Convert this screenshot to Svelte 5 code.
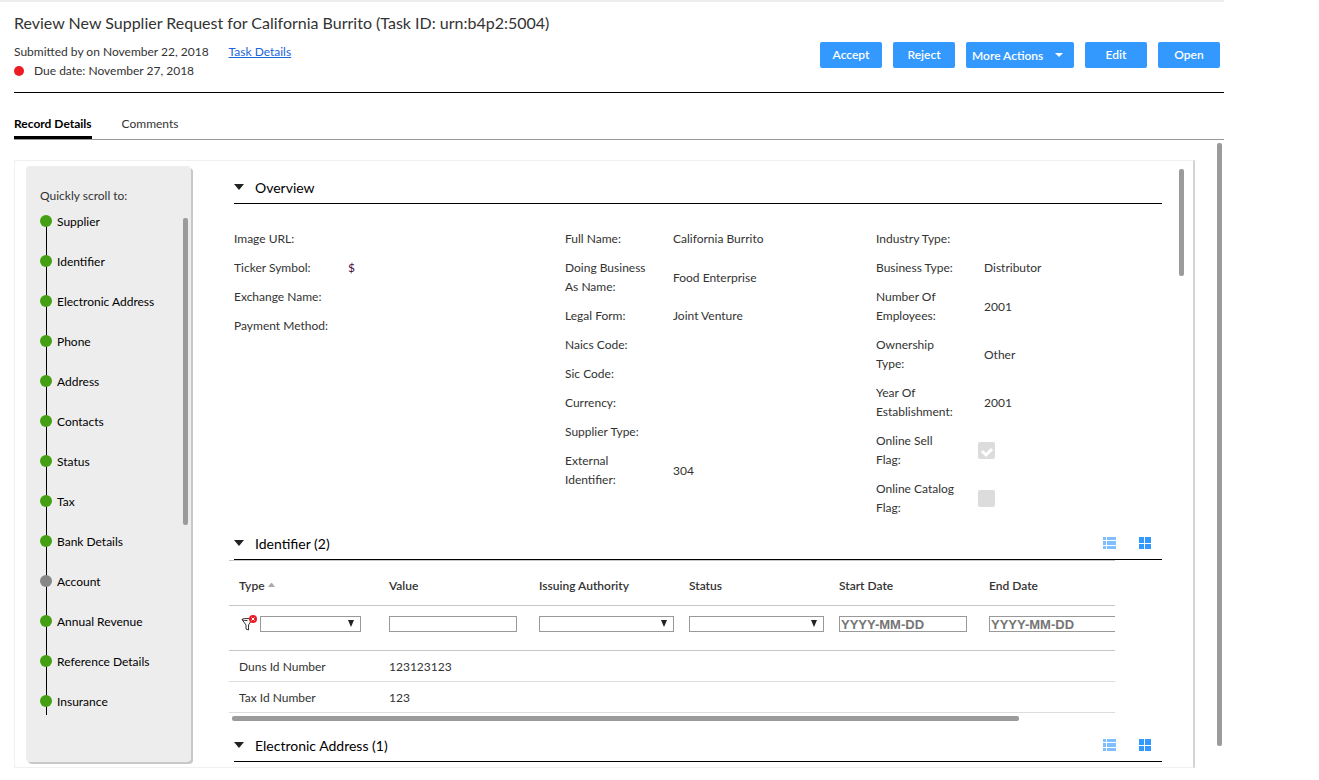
<!-- \src\components\tasks\SupplierReview.svelte -->

<script>
  let activeTab = $state('Record Details');
  const tabs = ['Record Details', 'Comments'];

  const steps = [
    { name: 'Supplier', done: true },
    { name: 'Identifier', done: true },
    { name: 'Electronic Address', done: true },
    { name: 'Phone', done: true },
    { name: 'Address', done: true },
    { name: 'Contacts', done: true },
    { name: 'Status', done: true },
    { name: 'Tax', done: true },
    { name: 'Bank Details', done: true },
    { name: 'Account', done: false },
    { name: 'Annual Revenue', done: true },
    { name: 'Reference Details', done: true },
    { name: 'Insurance', done: true }
  ];

  const overview = [
    [
      { label: 'Image URL:' },
      { label: 'Ticker Symbol:', value: '$' },
      { label: 'Exchange Name:' },
      { label: 'Payment Method:' }
    ],
    [
      { label: 'Full Name:', value: 'California Burrito' },
      { label: 'Doing Business As Name:', value: 'Food Enterprise' },
      { label: 'Legal Form:', value: 'Joint Venture' },
      { label: 'Naics Code:' },
      { label: 'Sic Code:' },
      { label: 'Currency:' },
      { label: 'Supplier Type:' },
      { label: 'External Identifier:', value: '304' }
    ],
    [
      { label: 'Industry Type:' },
      { label: 'Business Type:', value: 'Distributor' },
      { label: 'Number Of Employees:', value: '2001' },
      { label: 'Ownership Type:', value: 'Other' },
      { label: 'Year Of Establishment:', value: '2001' },
      { label: 'Online Sell Flag:', id: 'online-sell', flag: true },
      { label: 'Online Catalog Flag:', id: 'online-catalog', flag: false }
    ]
  ];

  const columns = [
    { name: 'Type', filter: 'select', sorted: true },
    { name: 'Value', filter: 'text' },
    { name: 'Issuing Authority', filter: 'select' },
    { name: 'Status', filter: 'select' },
    { name: 'Start Date', filter: 'date' },
    { name: 'End Date', filter: 'date' }
  ];

  const identifiers = [
    ['Duns Id Number', '123123123', '', '', '', ''],
    ['Tax Id Number', '123', '', '', '', '']
  ];
</script>

{#snippet sectionHead(title, views)}
  <div class="section-head">
    <h2>
      <button type="button" class="toggle">
        <svg width="10" height="6" viewBox="0 0 10 6"><path d="M0 0h10L5 6z" fill="#222" /></svg>
        {title}
      </button>
    </h2>
    {#if views}
      <div class="views">
        <button type="button" class="icon list" aria-label="List view">
          <svg width="13" height="12" viewBox="0 0 13 12" fill="#80bfff">
            <path d="M0 0h3v3H0zM4 0h9v3H4zM0 4h3v4H0zM4 4h9v4H4zM0 9h3v3H0zM4 9h9v3H4z" />
          </svg>
        </button>
        <button type="button" class="icon" aria-label="Grid view">
          <svg width="12" height="12" viewBox="0 0 12 12" fill="#3399ff">
            <path d="M0 0h5v6H0zM6 0h6v6H6zM0 7h5v5H0zM6 7h6v5H6z" />
          </svg>
        </button>
      </div>
    {/if}
  </div>
{/snippet}

<div class="page">
  <header>
    <div class="task">
      <h1>Review New Supplier Request for California Burrito (Task ID: urn:b4p2:5004)</h1>
      <p>Submitted by on November 22, 2018 <a href="#details">Task Details</a></p>
      <p><span class="due-dot"></span>Due date: November 27, 2018</p>
    </div>
    <div class="actions">
      <button type="button">Accept</button>
      <button type="button">Reject</button>
      <button type="button" class="more">
        More Actions
        <svg width="8" height="4" viewBox="0 0 8 4"><path d="M0 0h8L4 4z" fill="#fff" /></svg>
      </button>
      <button type="button">Edit</button>
      <button type="button">Open</button>
    </div>
  </header>

  <nav class="tabs">
    {#each tabs as tab}
      <button type="button" class:active={tab === activeTab} onclick={() => (activeTab = tab)}>{tab}</button>
    {/each}
  </nav>

  <div class="body">
    <div class="panel">
      <aside>
        <p>Quickly scroll to:</p>
        <ul>
          {#each steps as step}
            <li><span class="dot" class:pending={!step.done}></span><a href="#section">{step.name}</a></li>
          {/each}
        </ul>
        <div class="thumb side-thumb"></div>
      </aside>

      <main>
        {@render sectionHead('Overview', false)}
        <div class="overview">
          {#each overview as group}
            <div class="group">
              {#each group as field}
                <div class="field">
                  {#if field.id}
                    <label class="name" for={field.id}>{field.label}</label>
                    <span class="check">
                      <input type="checkbox" id={field.id} checked={field.flag} disabled />
                      {#if field.flag}
                        <svg width="17" height="17" viewBox="0 0 17 17">
                          <path d="M4 9l4 4 6-6" fill="none" stroke="#fff" stroke-width="3" />
                        </svg>
                      {/if}
                    </span>
                  {:else}
                    <span class="name">{field.label}</span>
                    <span class:money={field.value === '$'}>{field.value ?? ''}</span>
                  {/if}
                </div>
              {/each}
            </div>
          {/each}
        </div>

        {@render sectionHead('Identifier (2)', true)}
        <div class="table-wrap">
          <table>
            <thead>
              <tr>
                {#each columns as col}
                  <th>
                    {col.name}
                    {#if col.sorted}
                      <svg width="7" height="4" viewBox="0 0 7 4"><path d="M0 4h7L4 0H3z" fill="#aaa" /></svg>
                    {/if}
                  </th>
                {/each}
              </tr>
              <tr class="filters">
                {#each columns as col}
                  <td>
                    <div class="filter">
                      {#if col.sorted}
                        <button type="button" class="icon" aria-label="Clear filters">
                          <svg width="17" height="17" viewBox="0 0 17 17">
                            <path
                              d="M2 4.500Q2 3.500 7 3.500Q12 3.500 12 4.500L8.500 10v5L6 14v-4zM2 4.500Q4 6 7.500 5.500"
                              fill="none"
                              stroke="#333"
                            />
                            <circle cx="13" cy="4" r="4" fill="#ec1c24" />
                            <path d="M11.500 2.500l3 3m0-3l-3 3" stroke="#fff" />
                          </svg>
                        </button>
                      {/if}
                      {#if col.filter === 'select'}
                        <span class="select">
                          <select aria-label="{col.name} filter"><option></option></select>
                          <svg width="6" height="7" viewBox="0 0 6 7"><path d="M0 0h6L3 7z" fill="#222" /></svg>
                        </span>
                      {:else if col.filter === 'date'}
                        <input type="text" placeholder="YYYY-MM-DD" aria-label="{col.name} filter" />
                      {:else}
                        <input type="text" aria-label="{col.name} filter" />
                      {/if}
                    </div>
                  </td>
                {/each}
              </tr>
            </thead>
            <tbody>
              {#each identifiers as row}
                <tr>
                  {#each row as cell}
                    <td>{cell}</td>
                  {/each}
                </tr>
              {/each}
            </tbody>
          </table>
        </div>
        <div class="thumb table-thumb"></div>

        {@render sectionHead('Electronic Address (1)', true)}
      </main>
      <div class="thumb panel-thumb"></div>
    </div>
    <div class="thumb body-thumb"></div>
  </div>
</div>

<style>
  :global(body) {
    background: #fff;
  }

  .page {
    margin-right: 95px;
    border-top: 2px solid #ededed;
    padding-left: 14px;
    font-family: Lato, 'Open Sans', sans-serif;
    font-size: 12px;
    line-height: 19px;
    color: #333;
  }

  h1,
  h2,
  p,
  ul {
    margin: 0;
    padding: 0;
    font-weight: normal;
  }

  button {
    border: 0;
    padding: 0;
    background: none;
    font: inherit;
    color: inherit;
    cursor: pointer;
  }

  svg {
    display: block;
  }

  header {
    display: flex;
    justify-content: space-between;
    padding: 10px 4px 12px 0;
    border-bottom: 1px solid #000;
  }

  h1 {
    margin-bottom: 8px;
    font-size: 16px;
    line-height: 22px;
  }

  .task p {
    display: flex;
    align-items: center;
  }

  .task a {
    margin-left: 20px;
    color: #1a66d9;
  }

  .due-dot {
    width: 10px;
    height: 10px;
    margin-right: 10px;
    border-radius: 50%;
    background: #ec1c24;
  }

  .actions {
    display: flex;
    gap: 11px;
    padding-top: 30px;
  }

  .actions button {
    width: 62px;
    height: 26px;
    padding-bottom: 2px;
    border-radius: 2px;
    background: #3399ff;
    color: #fff;
    font-weight: 600;
  }

  .actions .more {
    display: flex;
    align-items: center;
    justify-content: space-between;
    width: 108px;
    padding: 0 11px 0 6px;
  }

  .tabs {
    display: flex;
    gap: 30px;
    padding-top: 21px;
    border-bottom: 1px solid #999;
  }

  .tabs button {
    padding-bottom: 3px;
    border-bottom: 3px solid transparent;
  }

  .tabs .active {
    border-color: #000;
    color: #000;
    font-weight: bold;
  }

  .body {
    position: relative;
    padding: 20px 29px 0 0;
  }

  .panel {
    position: relative;
    display: flex;
    border: 1px solid #f0f0f0;
    border-right: 2px solid #d4d4d4;
  }

  .thumb {
    border-radius: 2px;
    background: #9b9b9b;
  }

  .side-thumb,
  .panel-thumb,
  .body-thumb {
    position: absolute;
    width: 5px;
  }

  .side-thumb {
    top: 52px;
    right: 3px;
    height: 307px;
  }

  .panel-thumb {
    top: 8px;
    right: 9px;
    height: 107px;
  }

  .body-thumb {
    top: 3px;
    right: 2px;
    bottom: 22px;
  }

  .table-thumb {
    width: 787px;
    height: 5px;
    margin: 3px 0 8px -2px;
  }

  aside {
    position: relative;
    flex: 0 0 165px;
    box-sizing: border-box;
    margin: 5px 0 5px 11px;
    padding: 20px 0 0 14px;
    border-radius: 4px;
    background: #ededed;
    box-shadow: 2px 2px 0 #c8c8c8;
  }

  ul {
    list-style: none;
  }

  li {
    position: relative;
    display: flex;
    align-items: flex-start;
    gap: 5px;
    height: 40px;
    padding-top: 7px;
    box-sizing: border-box;
  }

  /* the thread that joins the dots */
  li::before {
    content: '';
    position: absolute;
    top: 16px;
    left: 6px;
    width: 1px;
    height: 40px;
    background: #000;
  }

  li:last-child::before {
    height: 14px;
  }

  li a {
    color: #000;
    text-decoration: none;
  }

  .dot {
    position: relative;
    z-index: 1;
    width: 12px;
    height: 12px;
    margin-top: 3px;
    border-radius: 50%;
    background: #43a012;
  }

  .dot.pending {
    background: #868686;
  }

  main {
    flex: 1;
    min-width: 0;
    padding: 10px 31px 5px 43px;
  }

  .section-head {
    display: flex;
    align-items: center;
    justify-content: space-between;
    height: 32px;
    border-bottom: 1px solid #000;
  }

  .toggle {
    display: flex;
    align-items: center;
    gap: 11px;
    color: #000;
    font-size: 14px;
  }

  .views {
    display: flex;
    gap: 23px;
    padding-right: 11px;
  }

  .overview {
    display: grid;
    grid-template-columns: 331px 311px 1fr;
    padding: 25px 0 10px;
  }

  .group {
    display: flex;
    flex-direction: column;
    gap: 10px;
  }

  .field {
    display: grid;
    grid-template-columns: 84px 1fr;
    column-gap: 24px;
    align-items: center;
  }

  .group:first-child .field {
    grid-template-columns: 104px 1fr;
    column-gap: 10px;
  }

  .money {
    color: #4a1040;
  }

  .check {
    display: grid;
    margin-left: -6px;
  }

  .check > * {
    grid-area: 1 / 1;
  }

  .check input {
    appearance: none;
    width: 17px;
    height: 17px;
    margin: 0;
    border-radius: 2px;
    background: #dcdcdc;
  }

  .table-wrap {
    overflow: hidden;
    margin: 0 47px 0 -5px;
  }

  table {
    width: 900px;
    border-collapse: separate;
    border-spacing: 0;
    border-top: 1px solid #c8c8c8;
    table-layout: fixed;
  }

  th,
  td {
    height: 30px;
    padding: 0 0 0 10px;
    border-bottom: 1px solid #ddd;
    text-align: left;
  }

  th {
    height: 40px;
    padding-top: 4px;
    border-color: #c8c8c8;
    font-weight: 600;
  }

  th svg {
    display: inline-block;
    vertical-align: 3px;
  }

  .filters td {
    height: 44px;
    border-color: #c8c8c8;
    vertical-align: top;
  }

  .filter {
    display: flex;
    gap: 3px;
    padding-top: 10px;
    height: 16px;
  }

  .filter .icon {
    margin: -2px 0 0 1px;
  }

  .filter input,
  select {
    box-sizing: border-box;
    height: 16px;
    border: 1px solid #999;
    border-radius: 0;
    background: #fff;
  }

  .filter input {
    width: 128px;
    padding: 0 1px;
    font: bold 13px 'Liberation Sans', sans-serif;
  }

  .filter input::placeholder {
    color: #757575;
  }

  .select {
    position: relative;
    width: 135px;
  }

  .icon + .select {
    width: 101px;
  }

  select {
    display: block;
    appearance: none;
    width: 100%;
  }

  .select svg {
    position: absolute;
    top: 4px;
    right: 7px;
    pointer-events: none;
  }
</style>
